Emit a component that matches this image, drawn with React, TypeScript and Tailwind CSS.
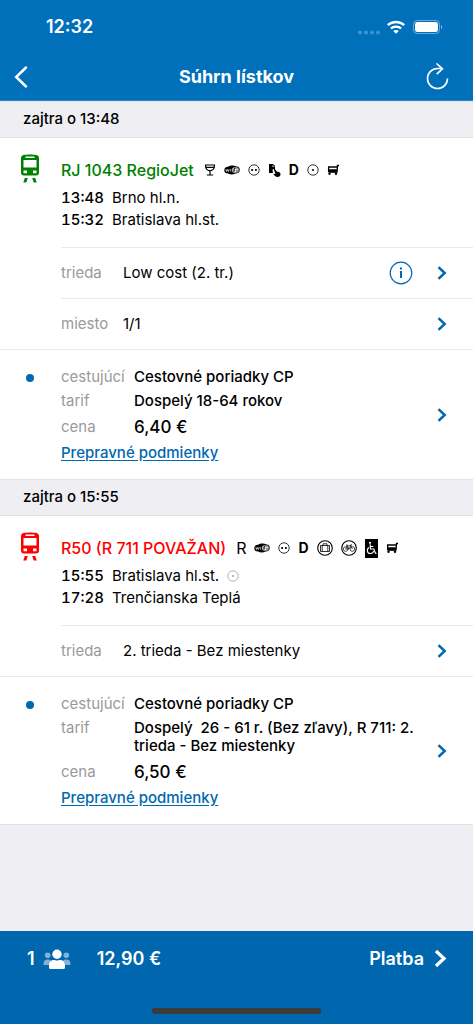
import type { ReactNode } from 'react';

type Trip = {
  when: string;
  name: string;
  color: string;
  services: ReactNode;
  from: string[];
  to: string[];
  fromNote?: ReactNode;
  rows: { label: string; value: string; info?: boolean }[];
  tariff: string;
  price: string;
};

function Chevron({ className }: { className: string }) {
  return (
    <svg viewBox="0 0 10 14" className={className} fill="none" stroke="currentColor" strokeWidth="2.5" aria-hidden="true">
      <path d="M1.5 1.2 7.7 7l-6.2 5.8" />
    </svg>
  );
}

function TrainIcon() {
  return (
    <svg viewBox="0 0 20 30" className="w-5 h-[30px]" aria-hidden="true">
      <path
        fill="currentColor"
        fillRule="evenodd"
        d="M3.5 1C7 .2 13 .2 16.5 1 18.4 1.5 19 2.500 19 4.5V18.5C19 20.5 18 21.5 16 21.5H4C2 21.5 1 20.5 1 18.5V4.5C1 2.5 1.6 1.5 3.5 1ZM5.500 2.600V4H14.500V2.600ZM3.500 6V13.500H16.500V6ZM3.500 16.500V19.200H7V16.500ZM13 16.500V19.200H16.500V16.500Z"
      />
      <path fill="currentColor" d="M4.800 24h3L6.300 28.600H3.300ZM12.200 24h3L16.700 28.600h-3Z" />
    </svg>
  );
}

function GlassIcon() {
  return (
    <svg viewBox="0 0 12 12" className="w-3 h-3" fill="none" stroke="currentColor" strokeWidth="1.2" aria-hidden="true">
      <path d="M1.500 1h9c0 3.500-1.500 5.800-4.500 5.800S1.500 4.500 1.500 1ZM2 3.300h8M6 6.800V11M2.800 11h6.400" />
    </svg>
  );
}

function WifiBadge() {
  return (
    <svg viewBox="0 0 16 10" className="w-4 h-2.5" aria-hidden="true">
      <path fill="currentColor" d="M4 1.800C6 .2 10 0 12 1.200 15 1.500 16 3 15.700 5.300 15.500 7.800 14 8.600 11.500 8.500 9 10 6 9.800 4.200 8.500 1.500 8.500.3 7.300.3 5.200.3 3.200 1.500 2 4 1.800Z" />
      <rect x="8.300" y="2.600" width="6.200" height="5" rx="1.500" fill="#fff" />
      <path fill="none" stroke="#fff" strokeWidth=".7" d="m1.800 4 .8 2.500.9-2 .9 2L5.200 4M6.700 4v2.600" />
      <path fill="none" stroke="currentColor" strokeWidth=".9" d="M9.900 7V3.600h1.700M10 5.200h1.300M13 4.700V7M13 3.200v.8" />
    </svg>
  );
}

function SocketIcon() {
  return (
    <svg viewBox="0 0 12 12" className="w-3 h-3" aria-hidden="true">
      <circle cx="6" cy="6" r="5.200" fill="none" stroke="currentColor" strokeWidth=".8" />
      <circle cx="4.100" cy="6" r="1.100" fill="currentColor" />
      <circle cx="7.900" cy="6" r="1.100" fill="currentColor" />
    </svg>
  );
}

function SeatIcon() {
  return (
    <svg viewBox="0 0 13 13" className="w-[13px] h-[13px]" fill="currentColor" aria-hidden="true">
      <path d="M1 0h4l2 2v3.500L5 5l-.5 1L5 9H1ZM5.800 5.500l1.200-.3 2 2.600c1.800-.6 3.500.6 3.500 2.400 0 1.700-1.200 2.800-3 2.800C7.800 13 6.800 12 5.300 10l2.200-.3Z" />
      <path fill="#fff" d="M4.500 1v1.800h2z" />
    </svg>
  );
}

function TargetIcon() {
  return (
    <svg viewBox="0 0 12 12" className="w-3 h-3" aria-hidden="true">
      <circle cx="6" cy="6" r="5.200" fill="none" stroke="currentColor" strokeWidth=".8" />
      <circle cx="6" cy="6" r="1" fill="currentColor" />
    </svg>
  );
}

function CartIcon() {
  return (
    <svg viewBox="0 0 12 12" className="w-3 h-3" aria-hidden="true">
      <path fill="none" stroke="currentColor" strokeWidth="1.300" d="M12 1.500h-1.500L10 8.200H1.800M1 3h9.300M1.600 3v4" />
      <path fill="currentColor" d="M1 5.200h9.300l-.3 3H1z" />
      <circle cx="2.500" cy="9.800" r="1.200" fill="currentColor" />
      <circle cx="9" cy="9.800" r="1.200" fill="currentColor" />
    </svg>
  );
}

function LuggageIcon() {
  return (
    <svg viewBox="0 0 16 16" className="w-4 h-4" fill="none" stroke="currentColor" aria-hidden="true">
      <circle cx="8" cy="8" r="7.300" strokeWidth="1.100" />
      <path strokeWidth=".8" d="M3.500 5.500h9v6h-9ZM6 5.500V3.800h4v1.700M5.200 5.500v6M10.800 5.500v6" />
    </svg>
  );
}

function BikeIcon() {
  return (
    <svg viewBox="0 0 16 16" className="w-4 h-4" fill="none" stroke="currentColor" aria-hidden="true">
      <circle cx="8" cy="8" r="7.300" strokeWidth="1.100" />
      <g strokeWidth=".7">
        <circle cx="4.600" cy="9" r="2.300" />
        <circle cx="11.400" cy="9" r="2.300" />
        <path d="M4.600 9 6.200 5.800h3.600L8 9H4.600M6 5l2 4M9.500 4.800 11.400 9M5 5h1.500M9.500 4.800H11" />
      </g>
    </svg>
  );
}

function WheelchairIcon() {
  return (
    <svg viewBox="0 0 13 19" className="w-[13px] h-[19px]" aria-hidden="true">
      <path fill="#000" d="M0 0h13v19H0z" />
      <circle cx="5" cy="3.800" r="1.100" fill="#fff" />
      <path fill="none" stroke="#fff" strokeWidth="1.100" d="M5.100 5.300 5.500 10h3.300l1.700 4.300 1-.4M5.300 7.500h3M4.200 8.500c-3 1.500-2.300 6 1.200 6 1.700 0 2.900-1 3.200-2.300" />
    </svg>
  );
}

function InfoIcon() {
  return (
    <svg viewBox="0 0 24 24" className="w-6 h-6" fill="none" stroke="currentColor" aria-hidden="true">
      <circle cx="12" cy="12" r="10.800" strokeWidth="1.200" />
      <path strokeWidth="2" d="M12 10v7M12 6.500v2" />
    </svg>
  );
}

function PeopleIcon() {
  return (
    <svg viewBox="0 0 28 20" className="w-7 h-5" fill="#fff" aria-hidden="true">
      <g opacity=".5">
        <circle cx="4.700" cy="6.300" r="2.800" />
        <circle cx="23.300" cy="6.300" r="2.800" />
        <path d="M.6 16v-1.500c0-2.500 1.500-4 4-4 1.500 0 2.500.3 3.300 1L6 16ZM27.400 16v-1.500c0-2.500-1.500-4-4-4-1.500 0-2.500.3-3.300 1L22 16Z" />
      </g>
      <circle cx="14" cy="5.200" r="4.700" />
      <path d="M6 18.800v-2.500c0-3.500 2.300-5.300 5-5.300 1 0 1.500.6 3 .6s2-.6 3-.6c2.700 0 5 1.800 5 5.300v2.500c0 .7-.4 1.200-1.200 1.200H7.200C6.400 20 6 19.500 6 18.800Z" />
    </svg>
  );
}

const trips: Trip[] = [
  {
    when: 'zajtra o 13:48',
    name: 'RJ 1043 RegioJet',
    color: 'text-[#008000]',
    services: (
      <>
        <GlassIcon />
        <WifiBadge />
        <SocketIcon />
        <SeatIcon />
        <span className="text-sm font-bold">D</span>
        <TargetIcon />
        <CartIcon />
      </>
    ),
    from: ['13:48', 'Brno hl.n.'],
    to: ['15:32', 'Bratislava hl.st.'],
    rows: [
      { label: 'trieda', value: 'Low cost (2. tr.)', info: true },
      { label: 'miesto', value: '1/1' },
    ],
    tariff: 'Dospelý 18-64 rokov',
    price: '6,40 €',
  },
  {
    when: 'zajtra o 15:55',
    name: 'R50 (R 711 POVAŽAN)',
    color: 'text-[#ff0000]',
    services: (
      <>
        <span className="text-base">R</span>
        <WifiBadge />
        <SocketIcon />
        <span className="text-sm font-bold">D</span>
        <LuggageIcon />
        <BikeIcon />
        <WheelchairIcon />
        <CartIcon />
      </>
    ),
    from: ['15:55', 'Bratislava hl.st.'],
    to: ['17:28', 'Trenčianska Teplá'],
    fromNote: <TargetIcon />,
    rows: [{ label: 'trieda', value: '2. trieda - Bez miestenky' }],
    tariff: 'Dospelý  26 - 61 r. (Bez zľavy), R 711: 2. trieda - Bez miestenky',
    price: '6,50 €',
  },
];

function TripSection({ trip }: { trip: Trip }) {
  return (
    <section>
      <h2 className="flex items-center h-[37px] pl-[23px] border-y border-[#e2e2e6] bg-[#efeef3] text-[15px] font-medium">
        {trip.when}
      </h2>

      <div className="flex pt-5 pb-4">
        <div className={`w-[61px] shrink-0 pl-5 -mt-1 ${trip.color}`}>
          <TrainIcon />
        </div>
        <div>
          <div className="flex items-center h-6">
            <h3 className={`mr-2.5 text-base font-medium ${trip.color}`}>{trip.name}</h3>
            <div className="flex items-center gap-2">{trip.services}</div>
          </div>
          <div className="mt-[5px] text-[15px] leading-[22px]">
            <p className="flex items-center">
              <span className="w-[51px] font-medium tabular-nums">{trip.from[0]}</span>
              {trip.from[1]}
              {trip.fromNote && <span className="ml-2 text-gray-400">{trip.fromNote}</span>}
            </p>
            <p className="flex items-center">
              <span className="w-[51px] font-medium tabular-nums">{trip.to[0]}</span>
              {trip.to[1]}
            </p>
          </div>
        </div>
      </div>

      {trip.rows.map((row) => (
        <div key={row.label} className="flex items-center h-[51px] ml-[61px] pr-[26px] border-t border-[#e9e9ea]">
          <span className="w-[62px] text-[15px] text-[#9a9a9a]">{row.label}</span>
          <span className="flex-1 text-[15px]">{row.value}</span>
          {row.info && (
            <button type="button" aria-label="Informácie" className="mr-6 text-[#0068b0]">
              <InfoIcon />
            </button>
          )}
          <button type="button" aria-label={`Zmeniť: ${row.label}`} className="text-[#0068b0]">
            <Chevron className="w-2.5 h-3.5" />
          </button>
        </div>
      ))}

      <div className="flex pt-4 pb-[15px] pr-[26px] border-t border-[#e9e9ea]">
        <div className="w-[61px] shrink-0 pl-[26px] pt-2">
          <div className="w-2 h-2 rounded-full bg-[#0068b0]" />
        </div>
        <div className="flex-1">
          <dl className="grid grid-cols-[73px_1fr] gap-y-0.5 text-[15px] font-medium">
            <dt className="leading-[22px] font-normal text-[#9a9a9a]">cestujúcí</dt>
            <dd className="leading-[22px]">Cestovné poriadky CP</dd>
            <dt className="leading-[22px] font-normal text-[#9a9a9a]">tarif</dt>
            <dd className="py-0.5 leading-[18px] whitespace-pre-wrap">{trip.tariff}</dd>
            <dt className="leading-[26px] font-normal text-[#9a9a9a]">cena</dt>
            <dd className="text-[17px] leading-[26px]">{trip.price}</dd>
          </dl>
          <a
            href="#podmienky"
            className="block w-fit mt-0.5 text-[15px] leading-[22px] font-medium text-[#0068b0] underline underline-offset-2"
          >
            Prepravné podmienky
          </a>
        </div>
        <button type="button" aria-label="Upraviť cestujúceho" className="text-[#0068b0]">
          <Chevron className="w-2.5 h-3.5" />
        </button>
      </div>
    </section>
  );
}

export default function App() {
  return (
    <div className="flex flex-col min-h-screen bg-[#efeef3] font-['Inter',sans-serif] text-black">
      <header className="bg-[#0070ba] border-b border-[#2a86c4] text-white">
        <div className="flex items-center justify-between h-[54px] pl-[46px] pr-[34px]">
          <span className="text-lg font-semibold">12:32</span>
          <div className="flex items-center">
            <svg viewBox="0 0 22 5" className="w-[22px] h-[5px] mt-2.5 mr-[7px]" fill="#fff" opacity=".25" aria-hidden="true">
              <circle cx="2" cy="2.500" r="2" />
              <circle cx="8" cy="2.500" r="2" />
              <circle cx="14" cy="2.500" r="2" />
              <circle cx="20" cy="2.500" r="2" />
            </svg>
            <svg viewBox="0 0 18 14" className="w-[18px] h-3.5 mr-2" fill="none" stroke="#fff" strokeWidth="2.300" aria-hidden="true">
              <path d="M.8 5.200C5.300.9 12.700.9 17.200 5.200M3.900 8.500c2.800-2.600 7.400-2.600 10.200 0" />
              <path fill="#fff" stroke="none" d="M9 13.800 6.200 11c1.500-1.400 4.100-1.400 5.600 0Z" />
            </svg>
            <svg viewBox="0 0 30 14" className="w-[30px] h-3.5 -mr-1" aria-hidden="true">
              <rect x=".5" y=".5" width="26" height="13" rx="3.500" fill="none" stroke="#fff" opacity=".4" />
              <rect x="2" y="2" width="23" height="10" rx="2.300" fill="#fff" />
              <path d="M28 5v4c1.700-.8 1.700-3.200 0-4Z" fill="#fff" opacity=".5" />
            </svg>
          </div>
        </div>
        <div className="grid grid-cols-[1fr_auto_1fr] items-center h-[46px] px-3.5">
          <button type="button" aria-label="Späť" className="w-fit">
            <svg viewBox="0 0 14 22" className="w-3.5 h-[22px]" fill="none" stroke="currentColor" strokeWidth="2.500" strokeLinecap="round" aria-hidden="true">
              <path d="M12 1.500 2.200 11l9.800 9.500" />
            </svg>
          </button>
          <h1 className="text-lg font-bold">Súhrn lístkov</h1>
          <button type="button" aria-label="Obnoviť" className="w-fit justify-self-end mr-2.5">
            <svg viewBox="0 0 24 28" className="w-6 h-7" fill="none" stroke="currentColor" strokeWidth="1.600" aria-hidden="true">
              <path d="M22.500 15.500A10 10 0 1 1 12.500 5.500H17.500M11.500 .5 17.500 5.800l-5.800 5.400" />
            </svg>
          </button>
        </div>
      </header>

      <main className="flex-1">
        <div className="bg-white border-b border-[#e2e2e6]">
          {trips.map((trip) => (
            <TripSection key={trip.name} trip={trip} />
          ))}
        </div>
      </main>

      <footer className="bg-[#0067ae] text-white">
        <div className="flex items-center h-[55px] pl-[27px] pr-[26px] text-lg font-semibold">
          <span className="mr-2">1</span>
          <PeopleIcon />
          <span className="ml-[26px]">12,90 €</span>
          <button type="button" className="flex items-center gap-2.5 ml-auto">
            Platba
            <Chevron className="w-[13px] h-[19px]" />
          </button>
        </div>
        <div className="flex justify-center pt-[22px] pb-2.5">
          <div className="w-[169px] h-1.5 rounded-full bg-[#3b3b3b]" />
        </div>
      </footer>
    </div>
  );
}
